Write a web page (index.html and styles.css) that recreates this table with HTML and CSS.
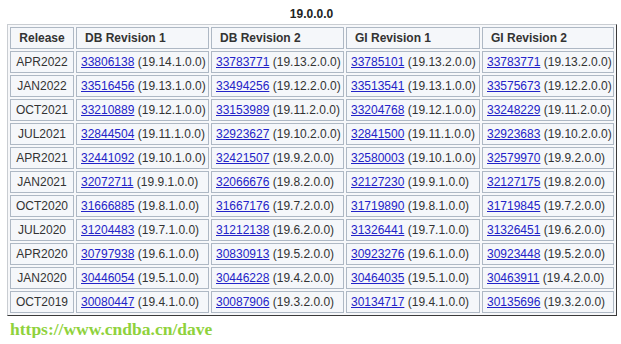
FILE: index.html
```html
<!DOCTYPE html>
<html>
<head>
<meta charset="utf-8">
<link rel="stylesheet" href="styles.css">
</head>
<body>
<div class="title">19.0.0.0</div>
<table class="rev">
<thead>
<tr><th class="c1">Release</th><th class="c2 l">DB Revision 1</th><th class="c3 l">DB Revision 2</th><th class="c4 l">GI Revision 1</th><th class="c5 l">GI Revision 2</th></tr>
</thead>
<tbody>
<tr><td class="rel">APR2022</td><td><a href="#">33806138</a> (19.14.1.0.0)</td><td><a href="#">33783771</a> (19.13.2.0.0)</td><td><a href="#">33785101</a> (19.13.2.0.0)</td><td><a href="#">33783771</a> (19.13.2.0.0)</td></tr>
<tr><td class="rel">JAN2022</td><td><a href="#">33516456</a> (19.13.1.0.0)</td><td><a href="#">33494256</a> (19.12.2.0.0)</td><td><a href="#">33513541</a> (19.13.1.0.0)</td><td><a href="#">33575673</a> (19.12.2.0.0)</td></tr>
<tr><td class="rel">OCT2021</td><td><a href="#">33210889</a> (19.12.1.0.0)</td><td><a href="#">33153989</a> (19.11.2.0.0)</td><td><a href="#">33204768</a> (19.12.1.0.0)</td><td><a href="#">33248229</a> (19.11.2.0.0)</td></tr>
<tr><td class="rel">JUL2021</td><td><a href="#">32844504</a> (19.11.1.0.0)</td><td><a href="#">32923627</a> (19.10.2.0.0)</td><td><a href="#">32841500</a> (19.11.1.0.0)</td><td><a href="#">32923683</a> (19.10.2.0.0)</td></tr>
<tr><td class="rel">APR2021</td><td><a href="#">32441092</a> (19.10.1.0.0)</td><td><a href="#">32421507</a> (19.9.2.0.0)</td><td><a href="#">32580003</a> (19.10.1.0.0)</td><td><a href="#">32579970</a> (19.9.2.0.0)</td></tr>
<tr><td class="rel">JAN2021</td><td><a href="#">32072711</a> (19.9.1.0.0)</td><td><a href="#">32066676</a> (19.8.2.0.0)</td><td><a href="#">32127230</a> (19.9.1.0.0)</td><td><a href="#">32127175</a> (19.8.2.0.0)</td></tr>
<tr><td class="rel">OCT2020</td><td><a href="#">31666885</a> (19.8.1.0.0)</td><td><a href="#">31667176</a> (19.7.2.0.0)</td><td><a href="#">31719890</a> (19.8.1.0.0)</td><td><a href="#">31719845</a> (19.7.2.0.0)</td></tr>
<tr><td class="rel">JUL2020</td><td><a href="#">31204483</a> (19.7.1.0.0)</td><td><a href="#">31212138</a> (19.6.2.0.0)</td><td><a href="#">31326441</a> (19.7.1.0.0)</td><td><a href="#">31326451</a> (19.6.2.0.0)</td></tr>
<tr><td class="rel">APR2020</td><td><a href="#">30797938</a> (19.6.1.0.0)</td><td><a href="#">30830913</a> (19.5.2.0.0)</td><td><a href="#">30923276</a> (19.6.1.0.0)</td><td><a href="#">30923448</a> (19.5.2.0.0)</td></tr>
<tr><td class="rel">JAN2020</td><td><a href="#">30446054</a> (19.5.1.0.0)</td><td><a href="#">30446228</a> (19.4.2.0.0)</td><td><a href="#">30464035</a> (19.5.1.0.0)</td><td><a href="#">30463911</a> (19.4.2.0.0)</td></tr>
<tr><td class="rel">OCT2019</td><td><a href="#">30080447</a> (19.4.1.0.0)</td><td><a href="#">30087906</a> (19.3.2.0.0)</td><td><a href="#">30134717</a> (19.4.1.0.0)</td><td><a href="#">30135696</a> (19.3.2.0.0)</td></tr>
</tbody>
</table>
<div class="mark">https://www.cndba.cn/dave</div>
</body>
</html>
```
FILE: styles.css
```css
html, body {
  margin: 0;
  padding: 0;
  background: #ffffff;
}
body {
  font-family: "Liberation Sans", Arial, sans-serif;
  font-size: 12px;
  color: #333;
}
.title {
  padding-top: 7px;
  line-height: 14px;
  height: 14px;
  margin-bottom: 3px;
  text-align: center;
  font-weight: bold;
  color: #222;
  padding-left: 2px;
}
.rev {
  margin-left: 7px;
  width: 608px;
  box-sizing: border-box;
  border-collapse: separate;
  border-spacing: 2px;
  border: 1px solid;
  border-color: #c9cdd2 #3a3a3a #3a3a3a #c9cdd2;
  background: #f7f8fa;
  table-layout: fixed;
}
.rev th, .rev td {
  box-sizing: border-box;
  border: 1px solid #aeb8c4;
  height: 22px;
  padding: 0 0 0 4px;
  line-height: 20px;
  white-space: nowrap;
  background: #f5f7fa;
  vertical-align: middle;
}
.rev th {
  font-weight: bold;
  color: #333;
  text-align: center;
}
.rev th.l {
  text-align: left;
  padding-left: 8px;
}
.c1 { width: 64px; }
.c2 { width: 133px; }
.c3 { width: 133px; }
.c4 { width: 134px; }
.c5 { width: 132px; }
.rev th.c1, .rev td.rel {
  text-align: center;
  padding: 0;
}
.rev a {
  color: #2323c8;
  text-decoration: underline;
}
.mark {
  margin-top: 4px;
  padding-left: 10px;
  font-family: "Liberation Serif", "Times New Roman", serif;
  font-weight: bold;
  font-size: 17.5px;
  line-height: 18px;
  color: #8fd23c;
}
```
